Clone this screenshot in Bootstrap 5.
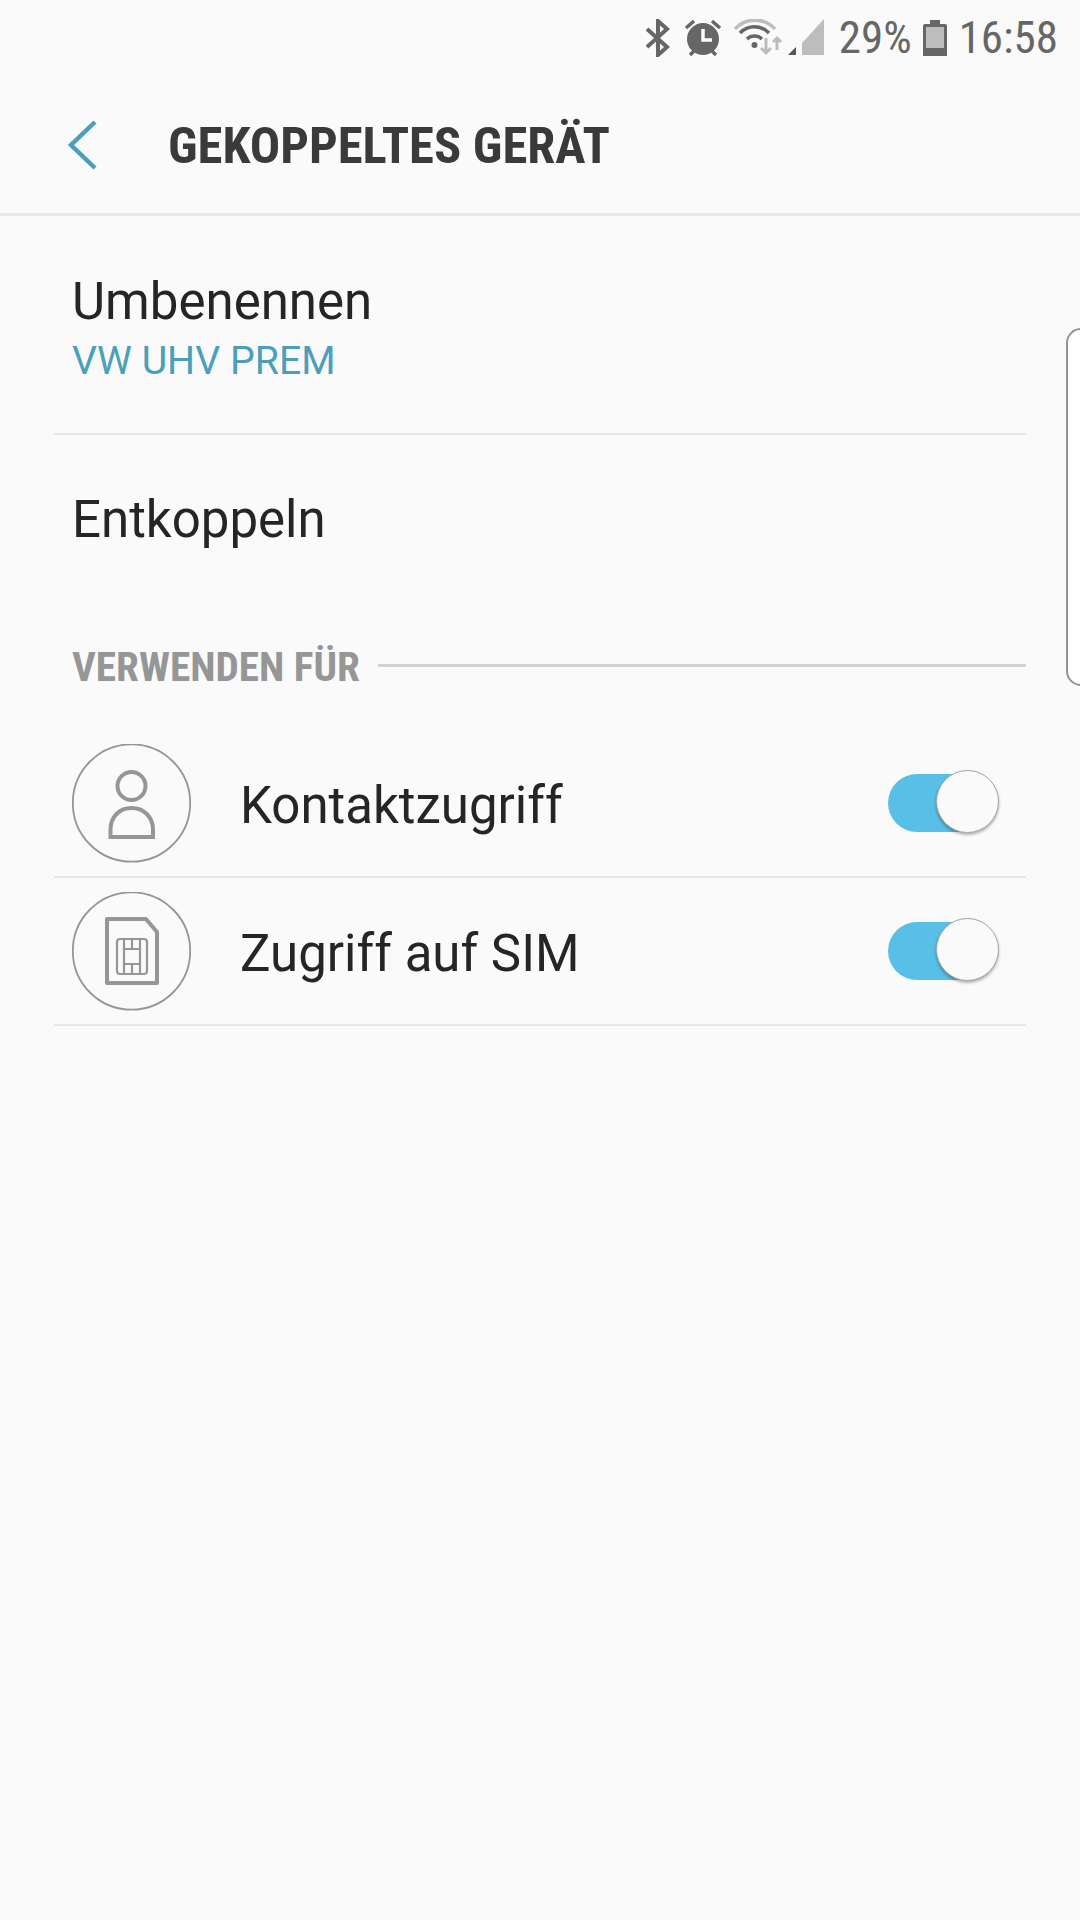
<!DOCTYPE html>
<html lang="de">
<head>
  <meta charset="UTF-8" />
  <meta name="viewport" content="width=device-width, initial-scale=1.0" />
  <title>Gekoppeltes Gerät</title>
  <link rel="stylesheet" href="https://cdn.jsdelivr.net/npm/bootstrap@5.3.2/dist/css/bootstrap.min.css">
  <script src="https://cdn.jsdelivr.net/npm/bootstrap@5.3.2/dist/js/bootstrap.bundle.min.js"></script>
  <style>
    html, body { height: 100%; }
    body {
      background: #fafafa;
      font-family: Roboto, "Liberation Sans", sans-serif;
      color: #252525;
      min-height: 1920px;
      position: relative;
      overflow: hidden;
    }
    .status-bar {
      height: 76px;
      padding-right: 22px;
      color: #666;
      font-size: 45px;
      font-stretch: condensed;
      line-height: 76px;
    }
    .status-bar svg { display: block; }
    .ico-bt { margin-right: 14px; }
    .ico-alarm { margin-right: 12px; }
    .status-pct { margin-left: 13px; margin-right: 11px; }
    .status-time { margin-left: 12px; }
    .app-head {
      height: 140px;
      border-bottom: 3px solid #e8e8e8;
      padding-left: 67px;
    }
    .app-title {
      margin: 0 0 0 69px;
      padding-top: 4px;
      font-size: 50.6px;
      font-weight: 700;
      font-stretch: condensed;
      color: #3a3a3a;
      line-height: 1;
    }
    .rows-wrap { margin: 0 54px; }
    .plain-row {
      padding: 0 18px;
      font-size: 51px;
      line-height: 1;
    }
    .row-rename { height: 219px; padding-top: 60px; border-bottom: 2px solid #e6e6e6; }
    .row-rename .sub-val { color: #4c9fbb; font-size: 39.3px; margin-top: 15px; line-height: 1; }
    .row-unpair { height: 202px; padding-top: 59px; }
    .section-head { padding-left: 18px; height: 60px; margin-bottom: 33px; }
    .section-label {
      padding-top: 2px;
      font-size: 41.3px;
      font-weight: 700;
      font-stretch: condensed;
      color: #969696;
      white-space: nowrap;
    }
    .section-rule { height: 3px; background: #d2d2d2; margin: 0 0 3px 18px; }
    .toggle-row {
      height: 148px;
      padding: 0 34px 0 18px;
      border-bottom: 2px solid #e6e6e6;
      font-size: 51px;
    }
    .toggle-text { padding-top: 7px; }
    .round-ico {
      width: 119px;
      height: 119px;
      margin-right: 49px;
    }
    .pill-toggle {
      width: 104px;
      height: 58px;
      border-radius: 29px;
      background: #58bfe6;
      position: relative;
    }
    .pill-knob {
      position: absolute;
      right: -7px;
      top: -4px;
      width: 63px;
      height: 63px;
      border-radius: 50%;
      background: #fafafa;
      border: 1px solid #a5a5a5;
      box-shadow: 0 2px 3px rgba(0,0,0,.3);
    }
    .edge-handle {
      position: absolute;
      left: 1066px;
      top: 328px;
      width: 30px;
      height: 358px;
      border: 2px solid #939393;
      border-radius: 16px;
      background: #fff;
    }
  </style>
</head>
<body>
  <div class="status-bar d-flex justify-content-end align-items-center">
    <svg width="24" height="38" viewBox="0 0 24 38" class="ico-bt" fill="none" stroke="#666" stroke-width="4">
      <path d="M1 10 L21 28 L12 36 V2 L21 10 L1 28"/>
    </svg>
    <svg width="38" height="38" viewBox="0 0 38 38" class="ico-alarm">
      <circle cx="19" cy="20" r="16" fill="#666"/>
      <path d="M2 9 L10 2 M36 9 L28 2 M6 36 L10 32 M32 36 L28 32" stroke="#666" stroke-width="3.5"/>
      <path d="M19 10 V21 H28" fill="none" stroke="#fafafa" stroke-width="3.5"/>
    </svg>
    <svg width="92" height="38" viewBox="0 0 92 38">
      <g fill="none" stroke-width="3.5">
        <path d="M1 10 A27 27 0 0 1 41 10" stroke="#bdbdbd"/>
        <path d="M6 14 A20 20 0 0 1 35 14" stroke="#666"/>
        <path d="M13 20 A11 11 0 0 1 28 20" stroke="#666"/>
      </g>
      <circle cx="20.5" cy="26" r="3" fill="#666"/>
      <path d="M32 19 V34 M27 29 L32 34 L37 29 M43 31 V19 M39 23 L43 19 L47 23" fill="none" stroke="#bdbdbd" stroke-width="3"/>
      <path d="M54 36 L62 28 V36 Z" fill="#555"/>
      <path d="M68 36 V24 L90 0 V36 Z" fill="#bdbdbd"/>
    </svg>
    <span class="status-pct">29%</span>
    <svg width="24" height="36" viewBox="0 0 24 36">
      <path d="M7 0 H17 V4 H22 Q24 4 24 6 V36 H0 V6 Q0 4 2 4 H7 Z" fill="#666"/>
      <rect x="3" y="7" width="18" height="21" fill="#bdbdbd"/>
    </svg>
    <span class="status-time">16:58</span>
  </div>

  <div class="app-head d-flex align-items-center">
    <svg width="32" height="50" viewBox="0 0 32 50" fill="none" stroke="#4c9fbb" stroke-width="4.5">
      <path d="M28 2 L4 25 L28 48"/>
    </svg>
    <h1 class="app-title">GEKOPPELTES GERÄT</h1>
  </div>

  <div class="rows-wrap">
    <div class="plain-row row-rename">
      <div>Umbenennen</div>
      <div class="sub-val">VW UHV PREM</div>
    </div>
    <div class="plain-row row-unpair">Entkoppeln</div>
    <div class="section-head d-flex align-items-center">
      <span class="section-label">VERWENDEN FÜR</span>
      <div class="section-rule flex-grow-1"></div>
    </div>
    <div class="toggle-row d-flex align-items-center">
      <svg class="round-ico flex-shrink-0" viewBox="0 0 119 119" fill="none" stroke="#969696">
        <circle cx="59.5" cy="59" r="58.7" stroke-width="1.8"/>
        <circle cx="59.5" cy="42" r="14" stroke-width="4"/>
        <path d="M38.5 93 V86 C38.5 72 48 64 59.5 64 C71 64 81 72 81 86 V93 Z" stroke-width="4"/>
      </svg>
      <span class="toggle-text flex-grow-1">Kontaktzugriff</span>
      <span class="pill-toggle"><span class="pill-knob"></span></span>
    </div>
    <div class="toggle-row d-flex align-items-center">
      <svg class="round-ico flex-shrink-0" viewBox="0 0 119 119" fill="none" stroke="#969696">
        <circle cx="59.5" cy="59" r="58.7" stroke-width="1.8"/>
        <path d="M35 27 H74 L85 40 V91 H35 Z" stroke-width="4" stroke-linejoin="round"/>
        <rect x="45" y="47" width="30" height="35" rx="3" stroke-width="2.2"/>
        <path d="M52 47 V82 M68 47 V82 M52 57 H68 M52 72 H68 M60 47 V57 M60 72 V82" stroke-width="2.2"/>
      </svg>
      <span class="toggle-text flex-grow-1">Zugriff auf SIM</span>
      <span class="pill-toggle"><span class="pill-knob"></span></span>
    </div>
  </div>

  <div class="edge-handle"></div>
</body>
</html>
